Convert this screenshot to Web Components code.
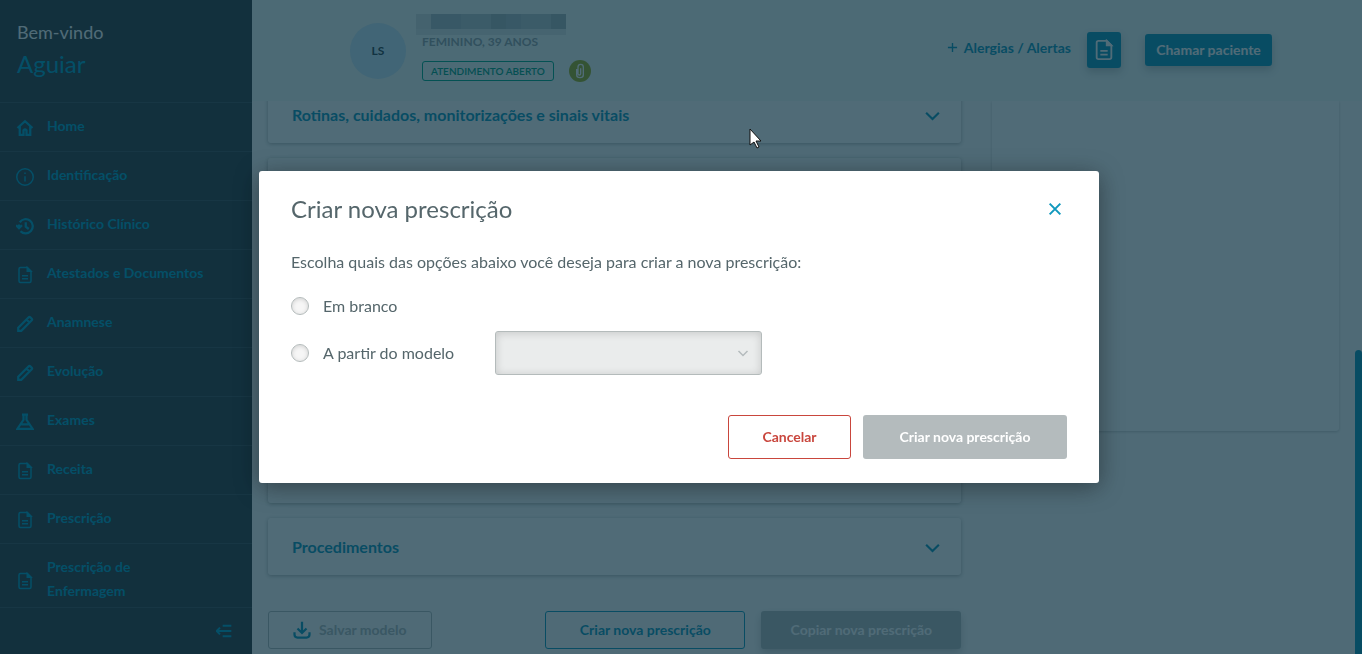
<!DOCTYPE html>
<html lang="pt-BR">
<head>
<meta charset="utf-8">
<title>Prescrição</title>
<style>
  :root {
    --primary: #1098bd;
    --gray: #b4bbbd;
    --text: #55666b;
    --nav: #00a0c9;
    --shadow: 0 1px 4px rgba(0, 0, 0, 0.3);
  }

  body {
    margin: 0;
    height: 100vh;
    overflow: hidden;
    font-family: Lato, "Liberation Sans", sans-serif;
    font-size: 14px;
    line-height: 24px;
    color: var(--text);
  }
</style>
</head>
<body>
<app-shell></app-shell>

<script>
const ICONS = {
  home: '<path d="M2 12 12 3l10 9M5 10v11h5v-6q2-2 4 0v6h5V10"/>',
  info: '<circle cx="12" cy="12" r="11"/><path d="M12 11v7M12 6v2"/>',
  history: '<path d="M5 7a9.500 9.500 0 1 1 1 12M0 11l4 4 4-4M4 15V10M13 7v6l4 3"/>',
  doc: '<path d="M6 2h9l5 5v13q0 2-2 2H6q-2 0-2-2V4q0-2 2-2z"/><path d="M15 2v5h5z" fill="currentColor"/><path d="M8 13h8M8 17h8"/>',
  pencil: '<path d="M3 21v-4L17 3q1-1 2 0l2 2q1 1 0 2L7 21zM14 6l4 4"/>',
  flask: '<path d="M8 2h8M10 2v7L2 21h20L14 9V2M7 15h10"/>',
  collapse: '<path d="M10 4h13M1 12h22M10 20h13M6 7l-5 5 5 5"/>',
  chevron: '<path d="M3 8l9 9 9-9"/>',
  close: '<path d="M4 4l16 16M20 4 4 20"/>',
  download: '<path d="M12 1v14M6 10l6 6 6-6M2 15v3q0 4 4 4h12q4 0 4-4v-3"/>',
  clip: '<path d="M7 9v9q0 4 5 4t5-4V6q0-4-4-4t-4 4v10q0 2 2 2t2-2V8"/>',
  plus: '<path d="M12 2v20M2 12h20"/>'
};

class UiIcon extends HTMLElement {
  connectedCallback() {
    const size = this.getAttribute('size') || 18;
    const stroke = this.getAttribute('stroke') || 2;
    this.attachShadow({ mode: 'open' }).innerHTML = `
      <style>
        :host { display: inline-flex; flex: none; }
        svg { display: block; }
      </style>
      <svg width="${size}" height="${size}" viewBox="0 0 24 24" fill="none"
        stroke="currentColor" stroke-width="${stroke}" aria-hidden="true">${ICONS[this.getAttribute('name')]}</svg>
    `;
  }
}

class UiButton extends HTMLElement {
  connectedCallback() {
    const disabled = this.hasAttribute('disabled') ? 'disabled' : '';
    const label = this.getAttribute('label');
    this.attachShadow({ mode: 'open' }).innerHTML = `
      <style>
        :host { display: inline-flex; height: 38px; color: var(--primary); }
        :host([size="large"]) { height: 44px; }
        :host([size="small"]) { height: 32px; }
        :host([size="icon"]) { height: 36px; }

        button {
          display: flex;
          align-items: center;
          justify-content: center;
          gap: 8px;
          box-sizing: border-box;
          width: 100%;
          padding: 0 24px;
          border: 1px solid currentColor;
          border-radius: 3px;
          background: transparent;
          color: inherit;
          font: 700 14px/24px Lato, sans-serif;
          white-space: nowrap;
          cursor: pointer;
        }

        :host([size="small"]) button,
        :host([size="icon"]) button { padding: 0 6px; }
        :host([kind="danger"]) { color: #c9463d; }
        :host([kind="muted"]) { color: var(--gray); }
        :host([kind="muted"]) ::slotted(ui-icon) { color: var(--primary); }

        :host([kind="filled"]) button,
        :host([kind="filled-muted"]) button {
          border: 0;
          background: var(--primary);
          color: #fff;
          box-shadow: 0 4px 8px rgba(0, 0, 0, 0.2);
        }

        :host([kind="filled-muted"]) button { background: var(--gray); }
        :host([kind="filled-muted"][size="large"]) button { box-shadow: none; }
      </style>
      <button type="button" ${disabled} ${label ? `aria-label="${label}"` : ''}><slot name="icon"></slot><slot></slot></button>
    `;
  }
}

class NavItem extends HTMLElement {
  connectedCallback() {
    this.attachShadow({ mode: 'open' }).innerHTML = `
      <style>
        :host { display: block; border-top: 1px solid #414e54; }

        a {
          display: flex;
          align-items: center;
          gap: 13px;
          padding: 11px 72px 13px 16px;
          color: var(--nav);
          font-weight: 700;
          text-decoration: none;
        }

        :host([wide]) a { padding-right: 24px; }
        ui-icon { padding-top: 3px; }
      </style>
      <a href="#"><ui-icon name="${this.getAttribute('icon')}" stroke="${this.getAttribute('stroke') || 3}"></ui-icon><span><slot></slot></span></a>
    `;
  }
}

class SideBar extends HTMLElement {
  connectedCallback() {
    this.attachShadow({ mode: 'open' }).innerHTML = `
      <style>
        :host {
          display: flex;
          flex-direction: column;
          min-height: 0;
          background: #303a3e;
        }

        header { padding: 16px 17px 14px; height: 72px; }
        .hello { color: #fff; font-size: 18px; line-height: 32px; }
        .name { color: var(--nav); font-size: 24px; line-height: 32px; }
        nav { flex: 1; min-height: 0; overflow: hidden; }

        footer {
          display: flex;
          justify-content: flex-end;
          align-items: center;
          height: 46px;
          padding-right: 20px;
          border-top: 1px solid #414e54;
        }

        footer button {
          display: flex;
          padding: 0;
          border: 0;
          background: none;
          color: var(--nav);
        }
      </style>
      <header>
        <div class="hello">Bem-vindo</div>
        <div class="name">Aguiar</div>
      </header>
      <nav>
        <nav-item icon="home">Home</nav-item>
        <nav-item icon="info" stroke="2">Identificação</nav-item>
        <nav-item icon="history">Histórico Clínico</nav-item>
        <nav-item icon="doc" stroke="2" wide>Atestados e Documentos</nav-item>
        <nav-item icon="pencil">Anamnese</nav-item>
        <nav-item icon="pencil">Evolução</nav-item>
        <nav-item icon="flask">Exames</nav-item>
        <nav-item icon="doc" stroke="2">Receita</nav-item>
        <nav-item icon="doc" stroke="2">Prescrição</nav-item>
        <nav-item icon="doc" stroke="2">Prescrição de Enfermagem</nav-item>
      </nav>
      <footer>
        <button type="button" aria-label="Recolher menu"><ui-icon name="collapse" size="16" stroke="3"></ui-icon></button>
      </footer>
    `;
  }
}

class PatientHeader extends HTMLElement {
  connectedCallback() {
    this.attachShadow({ mode: 'open' }).innerHTML = `
      <style>
        :host {
          display: flex;
          align-items: center;
          box-sizing: border-box;
          height: 101px;
          padding: 0 90px 0 98px;
          background: #f0faf8;
        }

        .avatar {
          display: flex;
          align-items: center;
          justify-content: center;
          width: 56px;
          height: 56px;
          border-radius: 50%;
          background: #cbeafa;
          color: #30434a;
          font-size: 12px;
          font-weight: 700;
        }

        .info { flex: 1; margin-left: 10px; padding-bottom: 6px; }
        /* patient name is redacted */
        .redacted { display: grid; grid-template-columns: repeat(10, 15px); height: 21px; }
        .redacted i { height: 15px; border-bottom: 6px solid #dde7e6; background: #bac9cc; }
        .redacted i:first-child { background: #d5dfe0; }
        .redacted i:nth-child(2), .redacted i:nth-child(3), .redacted i:nth-child(7), .redacted i:last-child { background: #afc0c7; }
        .redacted i:nth-child(6), .redacted i:last-child { background: #a8b8bb; }
        .sex { margin-left: 6px; font-size: 12px; font-weight: 700; line-height: 13px; color: #97a4a8; }
        .tags { display: flex; align-items: center; gap: 15px; margin: 12px 0 0 6px; }

        .status {
          padding: 0 8px;
          border: 1px solid #00a888;
          border-radius: 3px;
          color: #00a080;
          font-size: 10px;
          font-weight: 600;
          line-height: 18px;
        }

        .clip {
          display: flex;
          align-items: center;
          justify-content: center;
          width: 22px;
          height: 22px;
          border-radius: 50%;
          background: #a2b020;
          color: #fff;
        }

        .actions { display: flex; align-items: center; gap: 24px; padding-bottom: 2px; }
        .alerts { display: flex; align-items: center; gap: 6px; padding-bottom: 4px; color: var(--primary); font-weight: 700; text-decoration: none; }
        .group { display: flex; align-items: center; gap: 16px; }
        .call { min-width: 127px; }
      </style>
      <div class="avatar">LS</div>
      <div class="info">
        <div class="redacted"><i></i><i></i><i></i><i></i><i></i><i></i><i></i><i></i><i></i><i></i></div>
        <div class="sex">FEMININO, 39 ANOS</div>
        <div class="tags">
          <span class="status">ATENDIMENTO ABERTO</span>
          <span class="clip"><ui-icon name="clip" size="16"></ui-icon></span>
        </div>
      </div>
      <div class="actions">
        <div class="group">
          <a class="alerts" href="#"><ui-icon name="plus" size="11" stroke="3"></ui-icon>Alergias / Alertas</a>
          <ui-button kind="filled" size="icon" label="Documentos"><ui-icon slot="icon" name="doc" size="22"></ui-icon></ui-button>
        </div>
        <ui-button kind="filled" size="small" class="call">Chamar paciente</ui-button>
      </div>
    `;
  }
}

class AccordionCard extends HTMLElement {
  connectedCallback() {
    this.attachShadow({ mode: 'open' }).innerHTML = `
      <style>
        :host {
          display: block;
          flex: none;
          box-sizing: border-box;
          border-radius: 3px;
          background: #fff;
          box-shadow: var(--shadow);
          color: var(--primary);
        }

        :host([open]) { height: 345px; }

        button {
          display: flex;
          align-items: center;
          justify-content: space-between;
          width: 100%;
          padding: 17px 20px 16px 24px;
          border: 0;
          background: none;
          color: inherit;
          font: 700 16px/24px Lato, sans-serif;
          text-align: left;
        }
      </style>
      <button type="button"><slot></slot><ui-icon name="chevron" size="17" stroke="3"></ui-icon></button>
    `;
  }
}

class PrescriptionPage extends HTMLElement {
  connectedCallback() {
    this.attachShadow({ mode: 'open' }).innerHTML = `
      <style>
        :host {
          position: relative;
          display: grid;
          grid-template-columns: 2fr 1fr;
          gap: 31px;
          min-height: 0;
          overflow: hidden;
          padding: 0 23px 0 16px;
          background: #fbfcfc;
        }

        /* the column is scrolled to its end */
        .main {
          display: flex;
          flex-direction: column;
          justify-content: flex-end;
          gap: 15px;
          min-height: 0;
          padding-bottom: 5px;
        }

        .actions { display: flex; gap: 16px; margin-top: 21px; }
        .actions :first-child { margin-right: auto; }
        .wide { width: 200px; }

        aside {
          height: 330px;
          border-radius: 0 0 3px 3px;
          background: #fff;
          box-shadow: 0 1px 3px rgba(0, 0, 0, 0.2);
        }

        .thumb {
          position: absolute;
          right: 0;
          bottom: 0;
          width: 7px;
          height: 55%;
          border-radius: 4px 4px 0 0;
          background: var(--primary);
        }
      </style>
      <div class="main">
        <accordion-card>Rotinas, cuidados, monitorizações e sinais vitais</accordion-card>
        <accordion-card open></accordion-card>
        <accordion-card>Procedimentos</accordion-card>
        <div class="actions">
          <ui-button kind="muted" disabled><ui-icon slot="icon" name="download" size="18" stroke="3"></ui-icon>Salvar modelo</ui-button>
          <ui-button class="wide">Criar nova prescrição</ui-button>
          <ui-button kind="filled-muted" disabled class="wide">Copiar nova prescrição</ui-button>
        </div>
      </div>
      <aside></aside>
      <div class="thumb"></div>
    `;
  }
}

class ModalDialog extends HTMLElement {
  connectedCallback() {
    this.attachShadow({ mode: 'open' }).innerHTML = `
      <style>
        :host {
          position: fixed;
          inset: 0;
          display: flex;
          align-items: center;
          justify-content: center;
          padding-right: 4px;
          background: rgba(5, 44, 61, 0.7);
        }

        section {
          box-sizing: border-box;
          width: 840px;
          max-width: 100%;
          padding: 22px 32px 24px;
          border-radius: 3px;
          background: #fff;
          box-shadow: 0 4px 24px rgba(0, 0, 0, 0.4);
        }

        header { display: flex; align-items: center; justify-content: space-between; }
        h2 { margin: 0; font-size: 24px; font-weight: 400; line-height: 32px; }

        .close {
          display: flex;
          padding: 4px;
          border: 0;
          background: none;
          color: var(--primary);
        }

        footer { display: flex; justify-content: flex-end; gap: 12px; margin-top: 40px; }
      </style>
      <section role="dialog" aria-modal="true" aria-labelledby="title">
        <header>
          <h2 id="title"><slot name="title"></slot></h2>
          <button class="close" type="button" aria-label="Fechar"><ui-icon name="close" size="16" stroke="3"></ui-icon></button>
        </header>
        <slot></slot>
        <footer><slot name="actions"></slot></footer>
      </section>
    `;
  }
}

class PrescriptionForm extends HTMLElement {
  connectedCallback() {
    this.attachShadow({ mode: 'open' }).innerHTML = `
      <style>
        :host { display: block; font-size: 16px; }
        p { margin: 25px 0 17px; }
        .option { display: flex; align-items: center; }
        .option + .option { margin-top: 10px; }
        label { display: flex; align-items: center; gap: 14px; min-height: 30px; }

        input {
          appearance: none;
          width: 18px;
          height: 18px;
          margin: 0;
          border: 1px solid #b4bbbb;
          border-radius: 50%;
          background: #f6f6f6;
          box-shadow: inset 0 1px 4px rgba(0, 0, 0, 0.15);
        }

        .model { width: 204px; }
        .select { display: grid; align-items: center; width: 267px; }
        .select > * { grid-area: 1 / 1; }

        select {
          appearance: none;
          height: 44px;
          border: 1px solid #b4bbbb;
          border-radius: 3px;
          background: #eaecec;
          box-shadow: inset 0 1px 8px rgba(0, 0, 0, 0.16);
          opacity: 1;
        }

        .select ui-icon { z-index: 1; justify-self: end; margin-right: 13px; color: var(--gray); }
      </style>
      <p>Escolha quais das opções abaixo você deseja para criar a nova prescrição:</p>
      <div class="option">
        <label><input type="radio" name="source">Em branco</label>
      </div>
      <div class="option">
        <label class="model"><input type="radio" name="source">A partir do modelo</label>
        <div class="select">
          <select aria-label="Modelo" disabled></select>
          <ui-icon name="chevron" size="12" stroke="3"></ui-icon>
        </div>
      </div>
    `;
  }
}

class MousePointer extends HTMLElement {
  connectedCallback() {
    this.attachShadow({ mode: 'open' }).innerHTML = `
      <style>
        :host { position: fixed; left: 749px; top: 128px; pointer-events: none; }
        svg { display: block; }
      </style>
      <svg width="13" height="21" viewBox="0 0 13 21"><path d="M1 1v16l4-3 3 6 2-1-3-6h5z" fill="#fff" stroke="#111"/></svg>
    `;
  }
}

class AppShell extends HTMLElement {
  connectedCallback() {
    this.attachShadow({ mode: 'open' }).innerHTML = `
      <style>
        :host { display: grid; grid-template-columns: 252px 1fr; grid-template-rows: 100vh; }
        main { display: grid; grid-template-rows: auto 1fr; min-width: 0; min-height: 0; }
        patient-header { z-index: 1; }
        modal-dialog, mouse-pointer { z-index: 2; }
        .confirm { min-width: 204px; }
        .cancel { min-width: 123px; }
      </style>
      <side-bar></side-bar>
      <main>
        <patient-header></patient-header>
        <prescription-page></prescription-page>
      </main>
      <modal-dialog>
        <span slot="title">Criar nova prescrição</span>
        <prescription-form></prescription-form>
        <ui-button slot="actions" class="cancel" kind="danger" size="large">Cancelar</ui-button>
        <ui-button slot="actions" class="confirm" kind="filled-muted" size="large" disabled>Criar nova prescrição</ui-button>
      </modal-dialog>
      <mouse-pointer></mouse-pointer>
    `;
  }
}

customElements.define('ui-icon', UiIcon);
customElements.define('ui-button', UiButton);
customElements.define('nav-item', NavItem);
customElements.define('side-bar', SideBar);
customElements.define('patient-header', PatientHeader);
customElements.define('accordion-card', AccordionCard);
customElements.define('prescription-page', PrescriptionPage);
customElements.define('modal-dialog', ModalDialog);
customElements.define('prescription-form', PrescriptionForm);
customElements.define('mouse-pointer', MousePointer);
customElements.define('app-shell', AppShell);
</script>
</body>
</html>
